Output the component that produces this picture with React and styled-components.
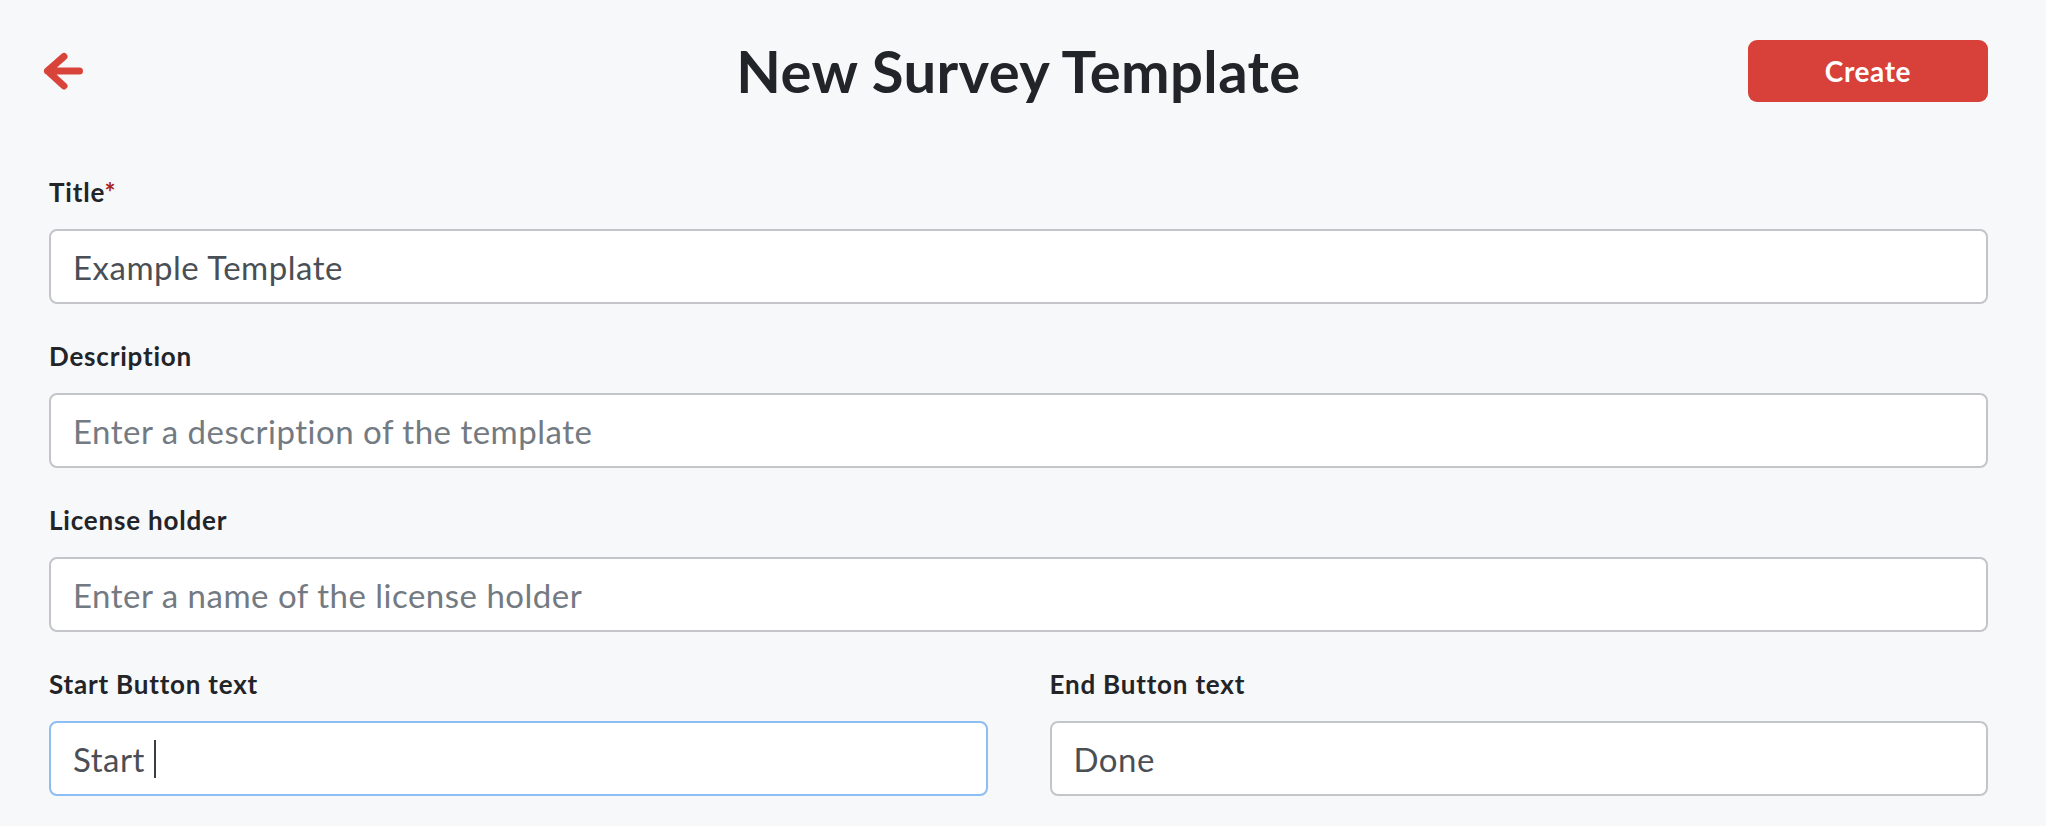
import React from "react";
import styled, { createGlobalStyle, css } from "styled-components";

const GlobalStyle = createGlobalStyle`
  html, body {
    margin: 0;
    padding: 0;
    background: #f7f8fa;
  }
  body {
    font-family: Lato, "Noto Sans", sans-serif;
    color: #222428;
  }
  * {
    box-sizing: border-box;
  }
`;

const Page = styled.div`
  padding: 40px 58px 40px 49px;
  min-height: 826px;
`;

const Header = styled.header`
  display: grid;
  grid-template-columns: 1fr auto 1fr;
  align-items: center;
  height: 62px;
`;

const BackButton = styled.button`
  justify-self: start;
  display: flex;
  align-items: center;
  padding: 0;
  margin-left: -7px;
  border: none;
  background: none;
  cursor: pointer;
  svg {
    display: block;
  }
`;

const PageTitle = styled.h1`
  margin: 0;
  font-size: 58px;
  font-weight: 700;
  line-height: 62px;
  color: #212428;
  letter-spacing: 0.4px;
`;

const CreateButton = styled.button`
  justify-self: end;
  width: 240px;
  height: 62px;
  border: none;
  border-radius: 9px;
  background: #d8403a;
  color: #fff;
  font-family: Lato, "Noto Sans", sans-serif;
  font-size: 28px;
  font-weight: 700;
  letter-spacing: 0.6px;
  cursor: pointer;
`;

const Form = styled.form`
  display: flex;
  flex-direction: column;
  gap: 38px;
  margin-top: 76px;
`;

const Row = styled.div`
  display: grid;
  grid-template-columns: 1fr 1fr;
  column-gap: 62px;
`;

const Field = styled.div`
  display: flex;
  flex-direction: column;
`;

const Label = styled.label`
  font-size: 26px;
  font-weight: 700;
  line-height: 28px;
  letter-spacing: 0.8px;
  margin-bottom: 23px;
  color: #222428;
`;

const Required = styled.span`
  color: #a8231a;
`;

const inputBase = css`
  width: 100%;
  height: 75px;
  padding: 0 22px;
  border: 2px solid ${(p) => (p.$focused ? "#8cbdf4" : "#c4c5c8")};
  border-radius: 8px;
  background: #fff;
  font-family: Lato, "Noto Sans", sans-serif;
  font-size: 33px;
  letter-spacing: 0.5px;
  color: #4a4f56;
  outline: none;
`;

const Input = styled.input`
  ${inputBase}
  &::placeholder {
    color: #737a82;
  }
`;

const FocusedInput = styled.div`
  ${inputBase}
  display: flex;
  align-items: center;
  white-space: pre;
`;

const Caret = styled.span`
  display: inline-block;
  width: 2px;
  height: 38px;
  background: #3a3d42;
`;

const BackArrow = () => (
  <svg width="44" height="44" viewBox="0 0 44 44" fill="none">
    <path
      d="M22 7.5 L5.5 22 L22 37 M5.5 22 H37.5"
      stroke="#d9443a"
      strokeWidth="7"
      strokeLinecap="round"
      strokeLinejoin="round"
    />
  </svg>
);

export default function App() {
  return (
    <>
      <GlobalStyle />
      <Page>
        <Header>
          <BackButton type="button" aria-label="Back">
            <BackArrow />
          </BackButton>
          <PageTitle>New Survey Template</PageTitle>
          <CreateButton type="button">Create</CreateButton>
        </Header>
        <Form onSubmit={(e) => e.preventDefault()}>
          <Field>
            <Label>
              Title<Required>*</Required>
            </Label>
            <Input defaultValue="Example Template" />
          </Field>
          <Field>
            <Label>Description</Label>
            <Input placeholder="Enter a description of the template" />
          </Field>
          <Field>
            <Label>License holder</Label>
            <Input placeholder="Enter a name of the license holder" />
          </Field>
          <Row>
            <Field>
              <Label>Start Button text</Label>
              <FocusedInput $focused>
                {"Start "}
                <Caret />
              </FocusedInput>
            </Field>
            <Field>
              <Label>End Button text</Label>
              <Input defaultValue="Done" />
            </Field>
          </Row>
        </Form>
      </Page>
    </>
  );
}
